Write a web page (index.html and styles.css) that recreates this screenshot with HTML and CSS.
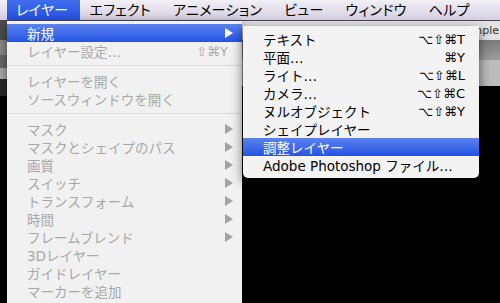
FILE: index.html
```html
<!DOCTYPE html>
<html lang="ja">
<head>
    <meta charset="UTF-8">
    <title>レイヤー メニュー</title>
    <link rel="stylesheet" href="styles.css">
</head>
<body>
    <div class="screen">
        <div class="menubar">
            <span class="mb-item active">レイヤー</span>
            <span class="mb-item">エフェクト</span>
            <span class="mb-item">アニメーション</span>
            <span class="mb-item">ビュー</span>
            <span class="mb-item">ウィンドウ</span>
            <span class="mb-item">ヘルプ</span>
        </div>

        <div class="workspace">
            <div class="side-strip"></div>
            <div class="comp">
                <div class="comp-title">Sample</div>
                <div class="comp-tabs"></div>
                <div class="comp-bar"></div>
                <div class="comp-view"></div>
            </div>
        </div>

        <ul class="menu main-menu">
            <li class="item selected"><span>新規</span><i class="arrow"></i></li>
            <li class="item disabled"><span>レイヤー設定…</span><span class="key">⇧⌘Y</span></li>
            <li class="sep"></li>
            <li class="item disabled"><span>レイヤーを開く</span></li>
            <li class="item disabled"><span>ソースウィンドウを開く</span></li>
            <li class="sep"></li>
            <li class="item disabled"><span>マスク</span><i class="arrow"></i></li>
            <li class="item disabled"><span>マスクとシェイプのパス</span><i class="arrow"></i></li>
            <li class="item disabled"><span>画質</span><i class="arrow"></i></li>
            <li class="item disabled"><span>スイッチ</span><i class="arrow"></i></li>
            <li class="item disabled"><span>トランスフォーム</span><i class="arrow"></i></li>
            <li class="item disabled"><span>時間</span><i class="arrow"></i></li>
            <li class="item disabled"><span>フレームブレンド</span><i class="arrow"></i></li>
            <li class="item disabled"><span>3Dレイヤー</span></li>
            <li class="item disabled"><span>ガイドレイヤー</span></li>
            <li class="item disabled"><span>マーカーを追加</span></li>
        </ul>

        <ul class="menu sub-menu">
            <li class="item"><span>テキスト</span><span class="key">⌥⇧⌘T</span></li>
            <li class="item"><span>平面…</span><span class="key">⌘Y</span></li>
            <li class="item"><span>ライト…</span><span class="key">⌥⇧⌘L</span></li>
            <li class="item"><span>カメラ…</span><span class="key">⌥⇧⌘C</span></li>
            <li class="item"><span>ヌルオブジェクト</span><span class="key">⌥⇧⌘Y</span></li>
            <li class="item"><span>シェイプレイヤー</span></li>
            <li class="item selected"><span>調整レイヤー</span></li>
            <li class="item"><span>Adobe Photoshop ファイル…</span></li>
        </ul>
    </div>
</body>
</html>
```

FILE: styles.css
```css
body {
    margin: 0;
    width: 500px;
    height: 303px;
    overflow: hidden;
    background: #000;
    font-family: "DejaVu Sans", "Noto Sans CJK JP", sans-serif;
}
.screen {
    position: relative;
    height: 303px;
}

/* top menu bar */
.menubar {
    display: flex;
    height: 20px;
    padding-left: 7px;
    border-bottom: 1px solid #4b4656;
    background: linear-gradient(#f2f0f7, #d5cfe1);
    font-size: 14px;
    line-height: 20px;
    font-feature-settings: "palt";
    color: #000;
}
.mb-item {
    padding: 0 13px 0 9px;
    letter-spacing: 0.3px;
}
.mb-item.active {
    padding-right: 12px;
    background: linear-gradient(#3f6dec, #2553e4);
    color: #fff;
}

/* window behind the menus */
.workspace {
    display: flex;
    height: 282px;
}
.side-strip {
    width: 7px;
    background: linear-gradient(#4d4d4d 0 19px, #8a8a8a 19px 34px, #6a6a6a 34px 47px, #a9a9a9 47px 58px, #2b2b2b 58px 75px, #000 75px);
}
.comp {
    flex: 1;
    display: flex;
    flex-direction: column;
}
.comp-title {
    height: 19px;
    padding-right: 1px;
    background: #e3e3e3;
    text-align: right;
    font-size: 11px;
    line-height: 19px;
    color: #333;
}
.comp-tabs {
    height: 20px;
    background: linear-gradient(#7c7c7c, #9d9d9d);
}
.comp-bar {
    height: 26px;
    background: #bcbcbc;
}
.comp-view {
    flex: 1;
    background: #000;
}

/* drop-down menus */
.menu {
    position: absolute;
    margin: 0;
    list-style: none;
    font-size: 13.5px;
    color: #000;
}
.main-menu {
    left: 7px;
    top: 21px;
    width: 235px;
    height: 290px;
    padding: 3px 0;
    background: #f1f1f1;
    box-shadow: 0 3px 10px rgba(0,0,0,0.55);
}
.sub-menu {
    left: 243px;
    top: 26px;
    width: 236px;
    padding: 4px 0;
    background: #f3f3f3;
    border-radius: 0 0 5px 5px;
    box-shadow: 0 4px 12px rgba(0,0,0,0.6);
}
.item {
    display: flex;
    justify-content: space-between;
    align-items: center;
    height: 18px;
    padding: 0 14px 0 20px;
    white-space: nowrap;
}
.item.disabled {
    color: #a8a8a8;
}
.item.selected {
    background: linear-gradient(#5c82ef, #2454e6);
    color: #fff;
}
.key {
    font-size: 13px;
}
.arrow {
    width: 0;
    height: 0;
    margin-right: -5px;
    border-left: 8px solid #a3a3a3;
    border-top: 5px solid transparent;
    border-bottom: 5px solid transparent;
}
.selected .arrow {
    border-left-color: #fff;
}
.sep {
    height: 1px;
    margin: 5px 0 6px;
    background: #d9d9d9;
}
```
